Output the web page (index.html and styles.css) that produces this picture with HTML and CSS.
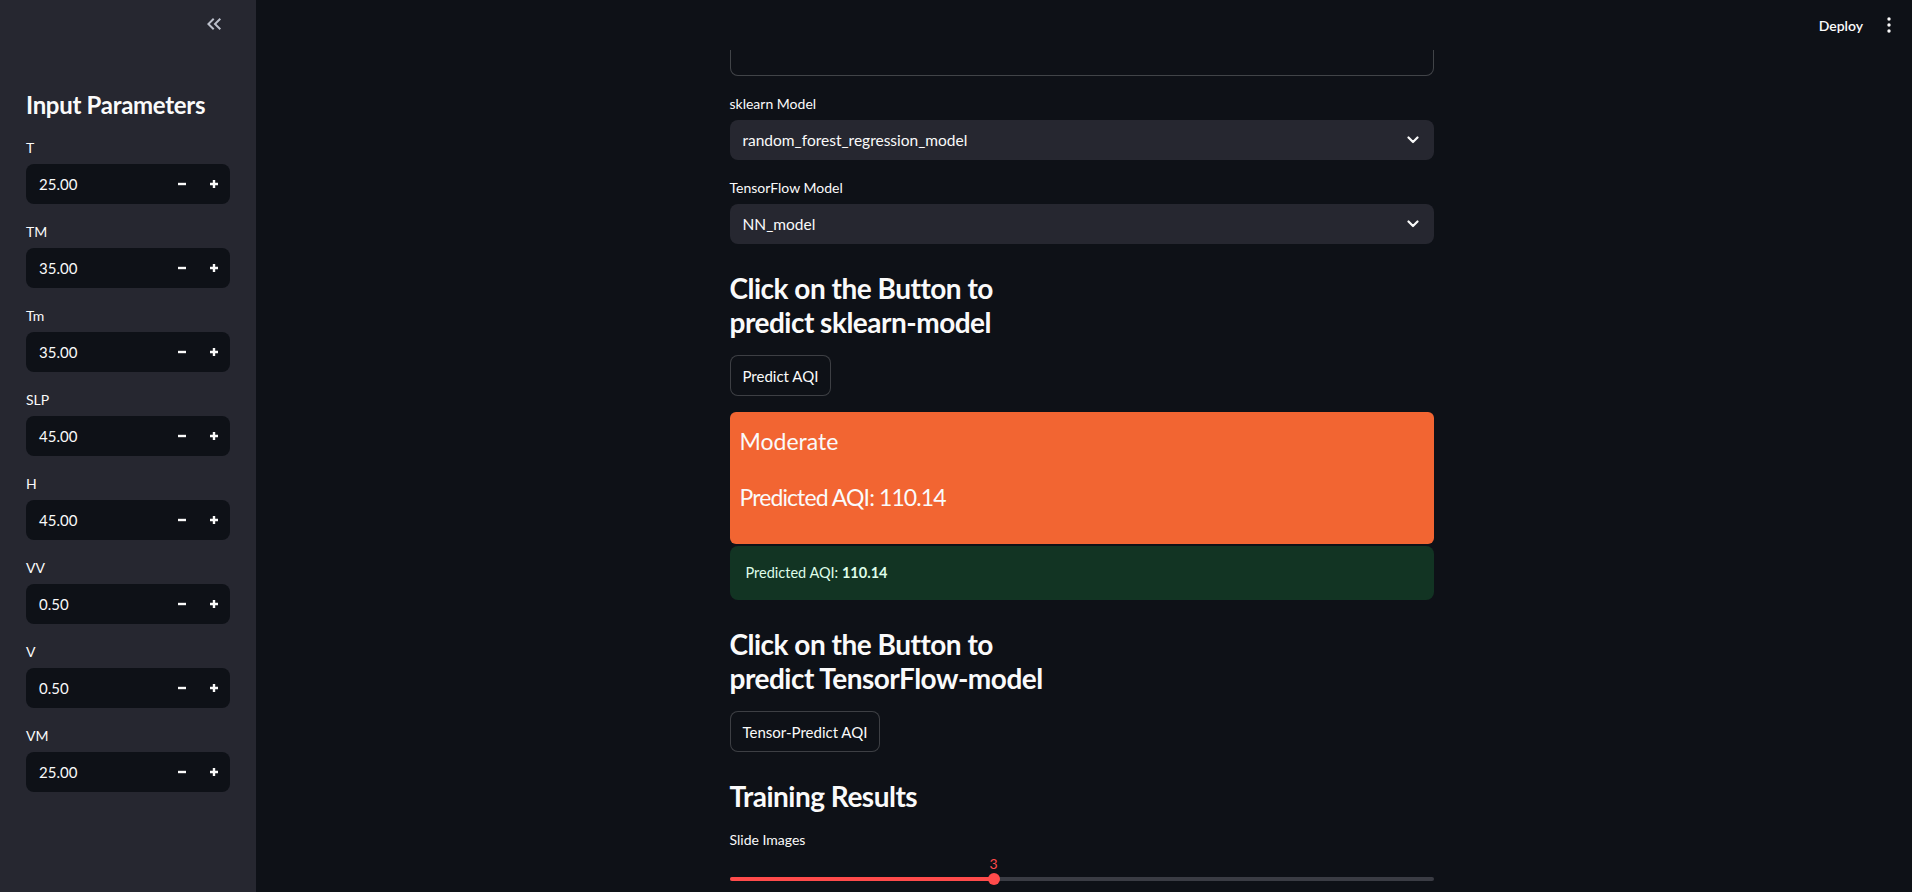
FILE: index.html
```html
<!DOCTYPE html>
<html lang="en">
<head>
<meta charset="utf-8">
<title>AQI Prediction</title>
<link rel="stylesheet" href="styles.css">
</head>
<body>
<div class="app">
  <aside class="sidebar">
    <div class="sb-top">
      <button class="collapse" aria-label="Collapse sidebar">
        <svg width="24" height="24" viewBox="0 0 24 24"><path fill="currentColor" d="M17.59 18 19 16.59 14.42 12 19 7.41 17.59 6l-6 6z M11 18l1.41-1.41L7.83 12l4.58-4.59L11 6l-6 6z"/></svg>
      </button>
    </div>
    <h2 class="sb-title">Input Parameters</h2>
    <div class="fields">
      <div class="field"><label class="lbl">T</label><div class="num"><span class="num-val">25.00</span><span class="step"><svg width="10" height="10" viewBox="0 0 10 10"><path d="M1 5h8" stroke="currentColor" stroke-width="2.4"/></svg></span><span class="step"><svg width="10" height="10" viewBox="0 0 10 10"><path d="M1 5h8M5 1v8" stroke="currentColor" stroke-width="2.4"/></svg></span></div></div>
      <div class="field"><label class="lbl">TM</label><div class="num"><span class="num-val">35.00</span><span class="step"><svg width="10" height="10" viewBox="0 0 10 10"><path d="M1 5h8" stroke="currentColor" stroke-width="2.4"/></svg></span><span class="step"><svg width="10" height="10" viewBox="0 0 10 10"><path d="M1 5h8M5 1v8" stroke="currentColor" stroke-width="2.4"/></svg></span></div></div>
      <div class="field"><label class="lbl">Tm</label><div class="num"><span class="num-val">35.00</span><span class="step"><svg width="10" height="10" viewBox="0 0 10 10"><path d="M1 5h8" stroke="currentColor" stroke-width="2.4"/></svg></span><span class="step"><svg width="10" height="10" viewBox="0 0 10 10"><path d="M1 5h8M5 1v8" stroke="currentColor" stroke-width="2.4"/></svg></span></div></div>
      <div class="field"><label class="lbl">SLP</label><div class="num"><span class="num-val">45.00</span><span class="step"><svg width="10" height="10" viewBox="0 0 10 10"><path d="M1 5h8" stroke="currentColor" stroke-width="2.4"/></svg></span><span class="step"><svg width="10" height="10" viewBox="0 0 10 10"><path d="M1 5h8M5 1v8" stroke="currentColor" stroke-width="2.4"/></svg></span></div></div>
      <div class="field"><label class="lbl">H</label><div class="num"><span class="num-val">45.00</span><span class="step"><svg width="10" height="10" viewBox="0 0 10 10"><path d="M1 5h8" stroke="currentColor" stroke-width="2.4"/></svg></span><span class="step"><svg width="10" height="10" viewBox="0 0 10 10"><path d="M1 5h8M5 1v8" stroke="currentColor" stroke-width="2.4"/></svg></span></div></div>
      <div class="field"><label class="lbl">VV</label><div class="num"><span class="num-val">0.50</span><span class="step"><svg width="10" height="10" viewBox="0 0 10 10"><path d="M1 5h8" stroke="currentColor" stroke-width="2.4"/></svg></span><span class="step"><svg width="10" height="10" viewBox="0 0 10 10"><path d="M1 5h8M5 1v8" stroke="currentColor" stroke-width="2.4"/></svg></span></div></div>
      <div class="field"><label class="lbl">V</label><div class="num"><span class="num-val">0.50</span><span class="step"><svg width="10" height="10" viewBox="0 0 10 10"><path d="M1 5h8" stroke="currentColor" stroke-width="2.4"/></svg></span><span class="step"><svg width="10" height="10" viewBox="0 0 10 10"><path d="M1 5h8M5 1v8" stroke="currentColor" stroke-width="2.4"/></svg></span></div></div>
      <div class="field"><label class="lbl">VM</label><div class="num"><span class="num-val">25.00</span><span class="step"><svg width="10" height="10" viewBox="0 0 10 10"><path d="M1 5h8" stroke="currentColor" stroke-width="2.4"/></svg></span><span class="step"><svg width="10" height="10" viewBox="0 0 10 10"><path d="M1 5h8M5 1v8" stroke="currentColor" stroke-width="2.4"/></svg></span></div></div>
    </div>
  </aside>

  <main class="main">
    <header class="topbar">
      <span class="deploy">Deploy</span>
      <span class="kebab"><svg width="4" height="16" viewBox="0 0 4 16"><circle cx="2" cy="2" r="1.7" fill="currentColor"/><circle cx="2" cy="8" r="1.7" fill="currentColor"/><circle cx="2" cy="14" r="1.7" fill="currentColor"/></svg></span>
    </header>

    <div class="content">
      <div class="box-tail"></div>

      <div class="field">
        <label class="lbl">sklearn Model</label>
        <div class="select"><span>random_forest_regression_model</span><svg width="12" height="8" viewBox="0 0 12 8"><path d="M1.5 1.5 6 6l4.5-4.5" fill="none" stroke="currentColor" stroke-width="2.2" stroke-linecap="round" stroke-linejoin="round"/></svg></div>
      </div>

      <div class="field">
        <label class="lbl">TensorFlow Model</label>
        <div class="select"><span>NN_model</span><svg width="12" height="8" viewBox="0 0 12 8"><path d="M1.5 1.5 6 6l4.5-4.5" fill="none" stroke="currentColor" stroke-width="2.2" stroke-linecap="round" stroke-linejoin="round"/></svg></div>
      </div>

      <div class="col"><h3 class="h3">Click on the Button to predict sklearn-model</h3></div>
      <div><button class="btn">Predict AQI</button></div>

      <div class="result">
        <div class="aqi-card">
          <p class="aqi-cat">Moderate</p>
          <p class="aqi-val">Predicted AQI: 110.14</p>
        </div>
        <div class="success">Predicted AQI: <b>110.14</b></div>
      </div>

      <div class="col"><h3 class="h3">Click on the Button to predict TensorFlow-model</h3></div>
      <div><button class="btn">Tensor-Predict AQI</button></div>

      <h3 class="h3 h3-last">Training Results</h3>

      <div class="field">
        <label class="lbl">Slide Images</label>
        <div class="slider">
          <div class="track">
            <div class="fill" style="width:37.5%"></div>
            <div class="thumb" style="left:37.5%"><span class="thumb-val">3</span></div>
          </div>
        </div>
      </div>
    </div>
  </main>
</div>
</body>
</html>
```

FILE: styles.css
```css
* { box-sizing: border-box; }

html, body {
  margin: 0;
  padding: 0;
  height: 892px;
  overflow: hidden;
  background: #0e1117;
  color: #fafafa;
  font-family: Lato, "Noto Sans", sans-serif;
}

.app {
  display: flex;
  height: 892px;
}

/* Sidebar */
.sidebar {
  width: 256px;
  flex: 0 0 256px;
  background: #262730;
  padding: 12px 26px;
  display: flex;
  flex-direction: column;
}

.sb-top {
  display: flex;
  justify-content: flex-end;
  padding-right: 4px;
  height: 24px;
}

.collapse {
  background: none;
  border: 0;
  padding: 0;
  width: 24px;
  height: 24px;
  color: #bcc0cb;
  display: flex;
}

.sb-title {
  margin: 55px 0 0 0;
  font-size: 24px;
  line-height: 28.8px;
  font-weight: 700;
  letter-spacing: -0.3px;
}

.fields {
  margin-top: 16px;
  display: flex;
  flex-direction: column;
  gap: 16px;
}

.field {
  display: flex;
  flex-direction: column;
}

.lbl {
  font-size: 14px;
  height: 24px;
  line-height: 24px;
  margin-bottom: 4px;
  color: #fafafa;
}

.num {
  height: 40px;
  background: #0e1117;
  border-radius: 8px;
  display: flex;
  align-items: center;
}

.num-val {
  flex: 1;
  padding-left: 13px;
  font-size: 15px;
}

.step {
  width: 32px;
  height: 40px;
  display: flex;
  align-items: center;
  justify-content: center;
  color: #fafafa;
}

/* Main */
.main {
  flex: 1;
  display: flex;
  flex-direction: column;
  padding-right: 5px;
}

.topbar {
  height: 50px;
  display: flex;
  align-items: center;
  justify-content: flex-end;
  padding-right: 8px;
  gap: 16px;
}

.deploy {
  font-size: 14px;
  font-weight: 600;
}

.kebab {
  width: 20px;
  display: flex;
  justify-content: center;
  color: #fafafa;
}

.content {
  width: 704px;
  margin: 0 auto;
  display: flex;
  flex-direction: column;
  gap: 16px;
}

.box-tail {
  height: 26px;
  border: 1px solid rgba(250, 250, 250, 0.22);
  border-top: 0;
  border-radius: 0 0 8px 8px;
}

.select {
  height: 40px;
  background: #262730;
  border-radius: 8px;
  display: flex;
  align-items: center;
  justify-content: space-between;
  padding: 0 15px 0 13px;
  font-size: 15.5px;
  color: #fafafa;
}

.col {
  width: 344px;
}

.h3 {
  margin: 0;
  padding-top: 12px;
  font-size: 28px;
  line-height: 33.6px;
  font-weight: 700;
  letter-spacing: -0.5px;
}

.h3-last {
  margin-bottom: -2px;
}

.btn {
  height: 41px;
  padding: 0 12px;
  background: #0e1117;
  color: #fafafa;
  border: 1px solid rgba(250, 250, 250, 0.2);
  border-radius: 8px;
  font-family: inherit;
  font-size: 15px;
}

.result {
  display: flex;
  flex-direction: column;
  gap: 2px;
}

.aqi-card {
  background: #f26532;
  border-radius: 6px;
  height: 132px;
  padding: 15px 10px;
  color: #fafafa;
}

.aqi-card p {
  margin: 0;
  font-size: 23px;
  line-height: 28px;
}

.aqi-card .aqi-val {
  margin-top: 28px;
  letter-spacing: -0.9px;
}

.success {
  background: rgba(33, 195, 84, 0.2);
  border-radius: 8px;
  height: 54px;
  padding: 16px;
  font-size: 14.5px;
  line-height: 22px;
  color: rgb(223, 253, 233);
}

.success b {
  font-weight: 700;
}

/* Slider */
.slider {
  height: 34px;
  display: flex;
  align-items: flex-end;
  padding-bottom: 9px;
}

.track {
  position: relative;
  width: 100%;
  height: 4px;
  border-radius: 2px;
  background: #3a3c44;
}

.fill {
  height: 4px;
  border-radius: 2px;
  background: #ff4b4b;
}

.thumb {
  position: absolute;
  top: 50%;
  width: 12px;
  height: 12px;
  margin: -6px 0 0 -6px;
  border-radius: 50%;
  background: #ff4b4b;
}

.thumb-val {
  position: absolute;
  bottom: 13px;
  left: 50%;
  transform: translateX(-50%);
  font-size: 14px;
  line-height: 16px;
  color: #ff4b4b;
}
```
